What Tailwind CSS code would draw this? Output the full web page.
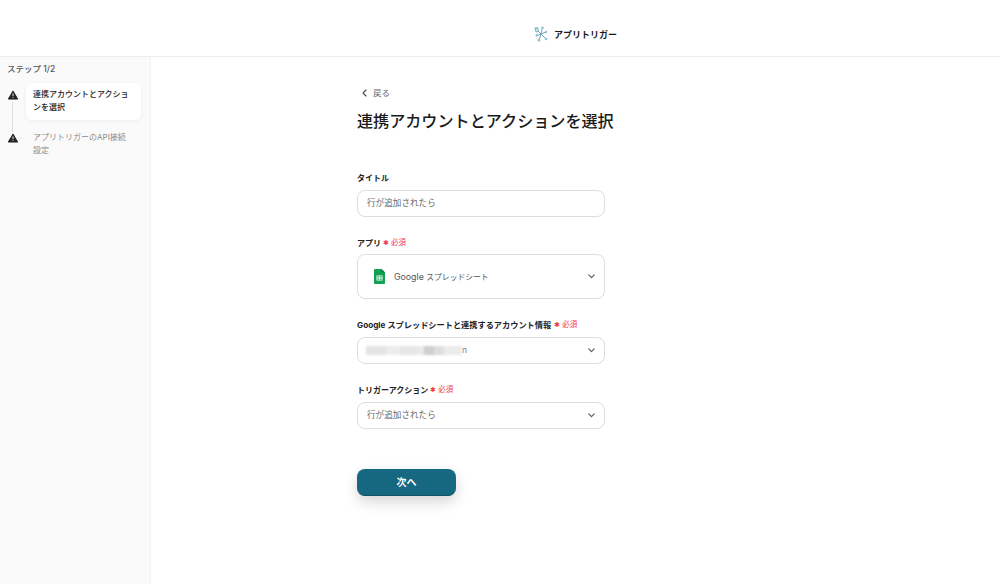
<!DOCTYPE html>
<html lang="ja">
<head>
  <meta charset="UTF-8" />
  <title>連携アカウントとアクションを選択</title>
  <script src="https://cdn.jsdelivr.net/npm/@tailwindcss/browser@4"></script>
</head>
<body class="bg-white text-[#222] font-['Inter','Noto_Sans_CJK_JP',sans-serif]">
  <div class="h-[584px] w-[1000px] overflow-hidden flex flex-col">

    <!-- Header -->
    <header class="h-[57px] shrink-0 border-b border-[#eeeeee] flex items-center justify-center">
      <div class="flex items-center gap-[6px] ml-[151px] mt-[12px]">
        <svg width="14" height="16" viewBox="0 0 14 16" fill="none" stroke="#6aa5bb" stroke-width="1" stroke-linecap="round">
          <path d="M1.5 2.5 L3.5 1.5 L4.5 5.5 L7 8 L12 13" />
          <path d="M1.5 2.5 L2 6 L4.5 5.5" />
          <path d="M8.5 1.5 L7 8 L5 14.5" />
          <path d="M12 6 L7 8 L2.5 9.5" />
          <g fill="#8fc0d2" stroke="none">
            <circle cx="1.8" cy="2.5" r="1.3" /><circle cx="8.5" cy="1.8" r="1.3" /><circle cx="12" cy="6" r="1.2" />
            <circle cx="12" cy="13" r="1.3" /><circle cx="5" cy="14.3" r="1.3" /><circle cx="2.8" cy="9.4" r="1.3" />
          </g>
        </svg>
        <span class="text-[9px] font-bold text-[#1a1a1a] leading-none">アプリトリガー</span>
      </div>
    </header>

    <div class="flex flex-1 min-h-0">
      <!-- Sidebar -->
      <aside class="w-[151px] shrink-0 bg-[#fafafa] border-r border-[#f3f3f3] pt-[6px] px-[7px]">
        <p class="text-[8.5px] font-medium text-[#555] leading-[12px]">ステップ 1/2</p>
        <ol class="relative mt-[8px]">
          <span class="absolute left-[5px] top-[19px] h-[30px] w-px bg-[#dddddd]"></span>
          <li class="flex items-start">
            <svg class="mt-[7px] ml-px shrink-0" width="10" height="10" viewBox="0 0 11 10">
              <path d="M5.5 0.5 L10.7 9.5 L0.3 9.5 Z" fill="#222" stroke="#222" stroke-linejoin="round" />
              <rect x="5" y="3.2" width="1" height="3" fill="#fff" />
              <rect x="5" y="7" width="1" height="1" fill="#fff" />
            </svg>
            <div class="ml-[8px] w-[115px] rounded-[6px] bg-white shadow-[0_1px_4px_rgba(0,0,0,0.05)] px-[7px] pt-[5px] pb-[6px] text-[8px] font-medium leading-[13px] text-[#222]">連携アカウントとアクションを選択</div>
          </li>
          <li class="flex items-start mt-[5px]">
            <svg class="mt-[8px] ml-px shrink-0" width="10" height="10" viewBox="0 0 11 10">
              <path d="M5.5 0.5 L10.7 9.5 L0.3 9.5 Z" fill="#222" stroke="#222" stroke-linejoin="round" />
              <rect x="5" y="3.2" width="1" height="3" fill="#fff" />
              <rect x="5" y="7" width="1" height="1" fill="#fff" />
            </svg>
            <div class="ml-[8px] w-[115px] px-[7px] py-[6px] text-[8px] leading-[12.5px] text-[#8a8a8a]">アプリトリガーのAPI接続<br />設定</div>
          </li>
        </ol>
      </aside>

      <!-- Main -->
      <main class="flex-1 pl-[206px] pt-[30px]">
        <a class="flex items-center gap-[6px] ml-[5px] text-[8.5px] text-[#666] leading-[12px]">
          <svg width="5" height="8" viewBox="0 0 5 8" fill="none" stroke="#444" stroke-width="1.1" stroke-linecap="round" stroke-linejoin="round"><path d="M4 1 L1 4 L4 7" /></svg>
          戻る
        </a>
        <h1 class="mt-[9px] text-[16.1px] font-medium leading-[26px] text-[#1a1a1a] whitespace-nowrap">連携アカウントとアクションを選択</h1>

        <form class="mt-[38px] w-[248px]">
          <label class="block text-[8px] font-bold leading-[12px] text-[#222]">タイトル</label>
          <div class="mt-[6px] h-[27px] rounded-[8px] border border-[#dcdde3] flex items-center px-[9px] text-[8.6px] text-[#666]">行が追加されたら</div>

          <label class="mt-[20px] flex items-center text-[8px] font-bold leading-[12px] text-[#222]">アプリ<span class="ml-[2px] text-[7px] font-normal text-[#f0384f]">✱</span><span class="ml-[2px] text-[7.5px] font-normal text-[#f0384f]">必須</span></label>
          <div class="mt-[5px] h-[45px] rounded-[8px] border border-[#dcdde3] flex items-center justify-between pl-[16px] pr-[9px]">
            <div class="flex items-center gap-[9px]">
              <svg width="11" height="15" viewBox="0 0 11 15">
                <path d="M1 0 H7.5 L11 3.5 V14 a1 1 0 0 1 -1 1 H1 a1 1 0 0 1 -1 -1 V1 a1 1 0 0 1 1 -1 Z" fill="#12a150" />
                <path d="M7.5 0 L11 3.5 H8.5 a1 1 0 0 1 -1 -1 Z" fill="#0c7a3c" />
                <path d="M2.5 6.5 H8.5 V11.5 H2.5 Z M3.3 7.3 V8.6 H5.1 V7.3 Z M5.9 7.3 V8.6 H7.7 V7.3 Z M3.3 9.4 V10.7 H5.1 V9.4 Z M5.9 9.4 V10.7 H7.7 V9.4 Z" fill="#fff" fill-rule="evenodd" />
              </svg>
              <span class="text-[8.8px] text-[#555]">Google <span class="text-[7.8px]">スプレッドシート</span></span>
            </div>
            <svg width="7" height="5" viewBox="0 0 9 6" fill="none" stroke="#555" stroke-width="1.4" stroke-linecap="round" stroke-linejoin="round"><path d="M1 1 L4.5 4.5 L8 1" /></svg>
          </div>

          <label class="mt-[20px] flex items-center text-[8.2px] font-bold leading-[12px] text-[#222] whitespace-nowrap">Google スプレッドシートと連携するアカウント情報<span class="ml-[3px] text-[7px] font-normal text-[#f0384f]">✱</span><span class="ml-[2px] text-[7.5px] font-normal text-[#f0384f]">必須</span></label>
          <div class="mt-[6px] h-[27px] rounded-[8px] border border-[#dcdde3] flex items-center justify-between pl-[8px] pr-[9px]">
            <div class="flex items-center">
              <div class="flex h-[9px] w-[96px] blur-[1px]">
                <span class="w-[20px] bg-[#e4e4e4]"></span><span class="w-[14px] bg-[#ededed]"></span><span class="w-[16px] bg-[#e6e6e6]"></span><span class="w-[8px] bg-[#e9e9e9]"></span><span class="w-[10px] bg-[#cfcfcf]"></span><span class="w-[10px] bg-[#dedede]"></span><span class="w-[18px] bg-[#ececec]"></span>
              </div>
              <span class="text-[8.6px] text-[#777] leading-none">n</span>
            </div>
            <svg width="7" height="5" viewBox="0 0 9 6" fill="none" stroke="#555" stroke-width="1.4" stroke-linecap="round" stroke-linejoin="round"><path d="M1 1 L4.5 4.5 L8 1" /></svg>
          </div>

          <label class="mt-[20px] flex items-center text-[8px] font-bold leading-[12px] text-[#222]">トリガーアクション<span class="ml-[2px] text-[7px] font-normal text-[#f0384f]">✱</span><span class="ml-[2px] text-[7.5px] font-normal text-[#f0384f]">必須</span></label>
          <div class="mt-[6px] h-[27px] rounded-[8px] border border-[#dcdde3] flex items-center justify-between pl-[9px] pr-[9px]">
            <span class="text-[8.6px] text-[#666]">行が追加されたら</span>
            <svg width="7" height="5" viewBox="0 0 9 6" fill="none" stroke="#555" stroke-width="1.4" stroke-linecap="round" stroke-linejoin="round"><path d="M1 1 L4.5 4.5 L8 1" /></svg>
          </div>

          <button type="button" class="mt-[40px] block h-[27px] w-[99px] rounded-[8px] bg-[#15687f] border-b border-[#0f5266] text-[10px] font-bold text-white shadow-[0_6px_14px_rgba(0,0,0,0.16)]">次へ</button>
        </form>
      </main>
    </div>
  </div>
</body>
</html>
